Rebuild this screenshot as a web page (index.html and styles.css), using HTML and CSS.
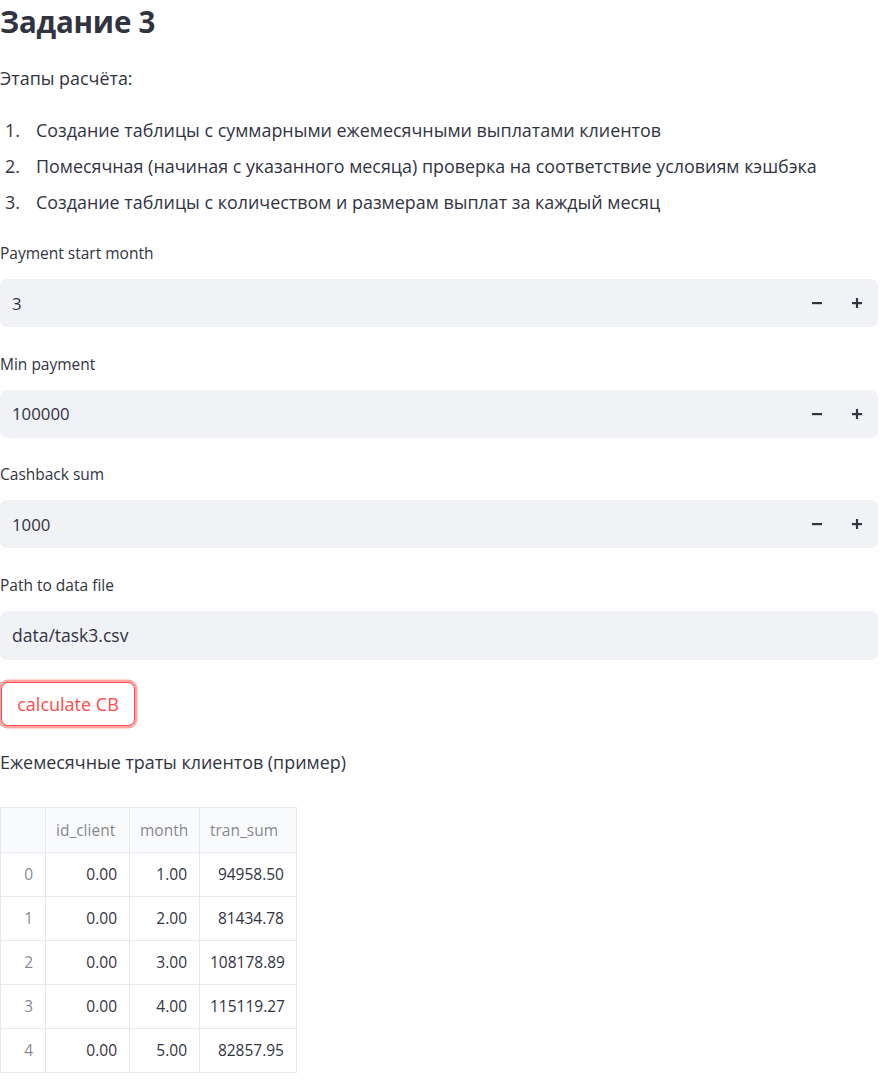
FILE: index.html
```html
<!DOCTYPE html>
<html lang="ru">
<head>
<meta charset="utf-8">
<title>Задание 3</title>
<link rel="stylesheet" href="styles.css">
</head>
<body>
<main class="main">
  <h2 class="title">Задание 3</h2>
  <p class="text intro">Этапы расчёта:</p>
  <ol class="steps">
    <li>Создание таблицы с суммарными ежемесячными выплатами клиентов</li>
    <li>Помесячная (начиная с указанного месяца) проверка на соответствие условиям кэшбэка</li>
    <li>Создание таблицы с количеством и размерам выплат за каждый месяц</li>
  </ol>

  <div class="field">
    <label class="label">Payment start month</label>
    <div class="input number">
      <span class="value">3</span>
      <span class="steppers">
        <svg class="step" viewBox="0 0 12 12" width="12" height="12"><rect x="1" y="5" width="10" height="2.2" fill="#31333F"/></svg>
        <svg class="step" viewBox="0 0 12 12" width="12" height="12"><rect x="1" y="5" width="10" height="2.2" fill="#31333F"/><rect x="4.9" y="1" width="2.2" height="10" fill="#31333F"/></svg>
      </span>
    </div>
  </div>

  <div class="field">
    <label class="label">Min payment</label>
    <div class="input number">
      <span class="value">100000</span>
      <span class="steppers">
        <svg class="step" viewBox="0 0 12 12" width="12" height="12"><rect x="1" y="5" width="10" height="2.2" fill="#31333F"/></svg>
        <svg class="step" viewBox="0 0 12 12" width="12" height="12"><rect x="1" y="5" width="10" height="2.2" fill="#31333F"/><rect x="4.9" y="1" width="2.2" height="10" fill="#31333F"/></svg>
      </span>
    </div>
  </div>

  <div class="field">
    <label class="label">Cashback sum</label>
    <div class="input number">
      <span class="value">1000</span>
      <span class="steppers">
        <svg class="step" viewBox="0 0 12 12" width="12" height="12"><rect x="1" y="5" width="10" height="2.2" fill="#31333F"/></svg>
        <svg class="step" viewBox="0 0 12 12" width="12" height="12"><rect x="1" y="5" width="10" height="2.2" fill="#31333F"/><rect x="4.9" y="1" width="2.2" height="10" fill="#31333F"/></svg>
      </span>
    </div>
  </div>

  <div class="field">
    <label class="label">Path to data file</label>
    <div class="input text-input">
      <span class="value">data/task3.csv</span>
    </div>
  </div>

  <button class="btn" type="button">calculate CB</button>

  <p class="text caption">Ежемесячные траты клиентов (пример)</p>

  <table class="df">
    <colgroup>
      <col class="w-idx"><col class="w-c1"><col class="w-c2"><col class="w-c3">
    </colgroup>
    <thead>
      <tr><th class="idx"></th><th>id_client</th><th>month</th><th>tran_sum</th></tr>
    </thead>
    <tbody>
      <tr><th class="idx">0</th><td>0.00</td><td>1.00</td><td>94958.50</td></tr>
      <tr><th class="idx">1</th><td>0.00</td><td>2.00</td><td>81434.78</td></tr>
      <tr><th class="idx">2</th><td>0.00</td><td>3.00</td><td>108178.89</td></tr>
      <tr><th class="idx">3</th><td>0.00</td><td>4.00</td><td>115119.27</td></tr>
      <tr><th class="idx">4</th><td>0.00</td><td>5.00</td><td>82857.95</td></tr>
    </tbody>
  </table>
</main>
</body>
</html>
```

FILE: styles.css
```css
html, body {
  margin: 0;
  padding: 0;
  background: #ffffff;
}

body {
  font-family: "Open Sans", "Noto Sans", "Liberation Sans", sans-serif;
  color: #31333F;
}

.main {
  width: 878px;
  display: flex;
  flex-direction: column;
  align-items: flex-start;
}

.title {
  margin: 0;
  font-size: 29.5px;
  font-weight: 700;
  line-height: 44px;
  height: 44px;
  letter-spacing: -0.2px;
}

.text {
  margin: 0;
  font-size: 17.9px;
  line-height: 28px;
}

.intro {
  margin-top: 20px;
}

.steps {
  margin: 24px 0 0 0;
  padding: 0;
  list-style: none;
  counter-reset: step;
  font-size: 17.9px;
  line-height: 28px;
  display: flex;
  flex-direction: column;
  gap: 8px;
}

.steps li {
  counter-increment: step;
  display: flex;
}

.steps li::before {
  content: counter(step) ".";
  flex: 0 0 31px;
  padding-left: 5px;
}

.field {
  width: 878px;
  display: flex;
  flex-direction: column;
  margin-top: 26px;
}

.field + .field {
  margin-top: 25.5px;
}

.label {
  font-size: 15.5px;
  line-height: 22px;
  height: 22px;
}

.input {
  margin-top: 15px;
  height: 48px;
  background: #F0F2F6;
  border-radius: 7px;
  display: flex;
  align-items: center;
  padding: 0 12px;
  box-sizing: border-box;
  font-size: 17.5px;
}

.number .value {
  font-size: 16.8px;
}

.text-input {
  height: 49px;
}

.value {
  flex: 1;
}

.steppers {
  display: flex;
  gap: 28px;
  align-items: center;
  margin-right: 3px;
}

.step {
  display: block;
}

.btn {
  margin: 22px 0 0 1px;
  height: 44px;
  width: 134px;
  box-sizing: border-box;
  border: 1px solid #FF4B4B;
  border-radius: 7px;
  background: #ffffff;
  color: #FF4B4B;
  font-family: inherit;
  font-size: 18px;
  box-shadow: 0 0 0 2.5px rgba(255, 75, 75, 0.5);
  padding: 0 12px;
}

.caption {
  margin-top: 22px;
}

.df {
  margin-top: 31px;
  border-collapse: collapse;
  table-layout: fixed;
  width: 296px;
  font-size: 15.5px;
  border: 1px solid #E6E9EF;
}

.w-idx { width: 45px; }
.w-c1 { width: 84px; }
.w-c2 { width: 70px; }
.w-c3 { width: 97px; }

.df th,
.df td {
  border: 1px solid #E6E9EF;
  padding: 0 12px 0 10px;
  height: 44px;
  box-sizing: border-box;
  text-align: right;
  font-weight: 400;
  white-space: nowrap;
}

.df thead th {
  height: 45px;
  text-align: left;
  color: rgba(49, 51, 63, 0.6);
  background: #F9FAFB;
}

.df .idx {
  color: rgba(49, 51, 63, 0.6);
  text-align: right;
  padding: 0 12px 0 0;
}
```
